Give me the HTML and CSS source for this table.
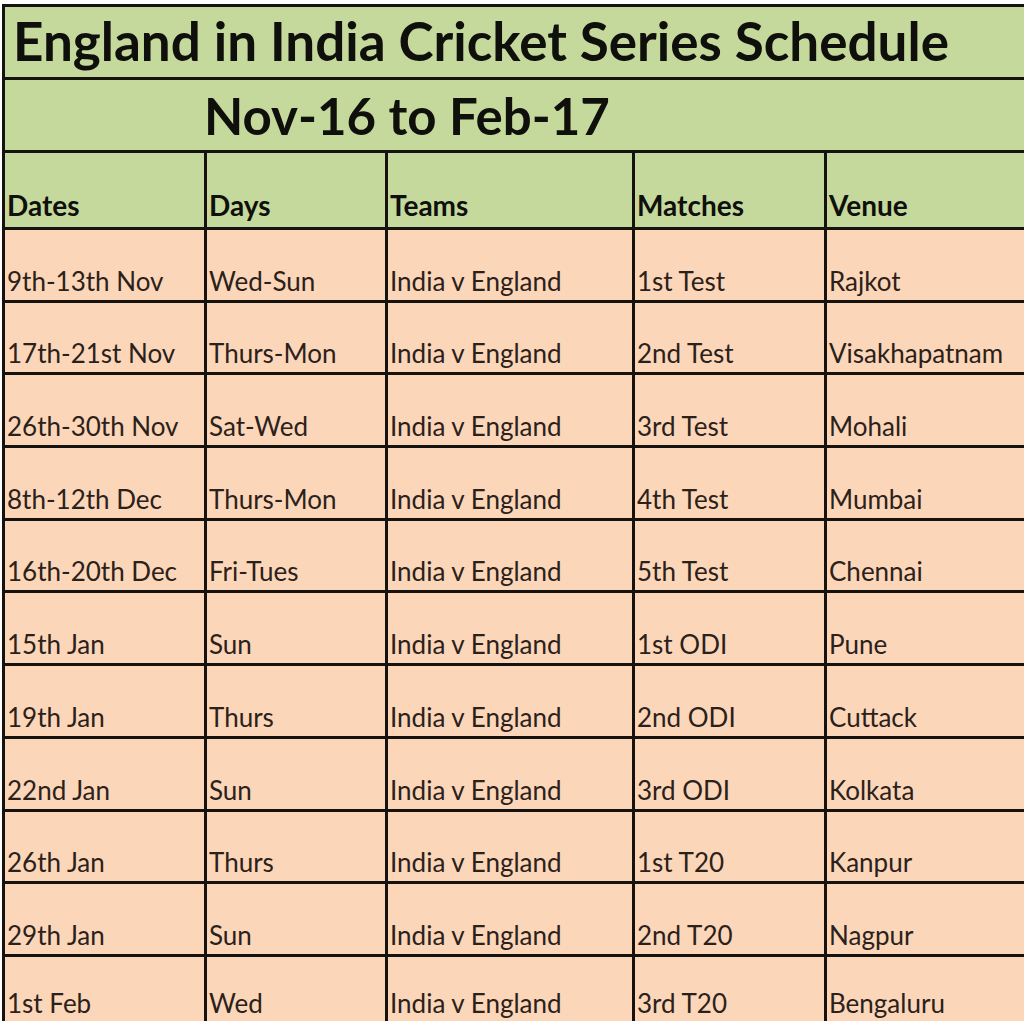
FILE: index.html
```html
<!DOCTYPE html>
<html>
<head>
<meta charset="utf-8">
<title>England in India Cricket Series Schedule</title>
<link rel="stylesheet" href="styles.css">
</head>
<body>
<div class="sheet">
<table class="schedule">
  <colgroup>
    <col class="c1"><col class="c2"><col class="c3"><col class="c4"><col class="c5">
  </colgroup>
  <tr class="title-row"><td colspan="5" class="title">England in India Cricket Series Schedule</td></tr>
  <tr class="sub-row"><td colspan="5" class="subtitle">Nov-16 to Feb-17</td></tr>
  <tr class="head-row"><th>Dates</th><th>Days</th><th>Teams</th><th>Matches</th><th>Venue</th></tr>
  <tr><td>9th-13th Nov</td><td>Wed-Sun</td><td>India v England</td><td>1st Test</td><td>Rajkot</td></tr>
  <tr><td>17th-21st Nov</td><td>Thurs-Mon</td><td>India v England</td><td>2nd Test</td><td>Visakhapatnam</td></tr>
  <tr><td>26th-30th Nov</td><td>Sat-Wed</td><td>India v England</td><td>3rd Test</td><td>Mohali</td></tr>
  <tr><td>8th-12th Dec</td><td>Thurs-Mon</td><td>India v England</td><td>4th Test</td><td>Mumbai</td></tr>
  <tr><td>16th-20th Dec</td><td>Fri-Tues</td><td>India v England</td><td>5th Test</td><td>Chennai</td></tr>
  <tr><td>15th Jan</td><td>Sun</td><td>India v England</td><td>1st ODI</td><td>Pune</td></tr>
  <tr><td>19th Jan</td><td>Thurs</td><td>India v England</td><td>2nd ODI</td><td>Cuttack</td></tr>
  <tr><td>22nd Jan</td><td>Sun</td><td>India v England</td><td>3rd ODI</td><td>Kolkata</td></tr>
  <tr><td>26th Jan</td><td>Thurs</td><td>India v England</td><td>1st T20</td><td>Kanpur</td></tr>
  <tr><td>29th Jan</td><td>Sun</td><td>India v England</td><td>2nd T20</td><td>Nagpur</td></tr>
  <tr class="last-row"><td>1st Feb</td><td>Wed</td><td>India v England</td><td>3rd T20</td><td>Bengaluru</td></tr>
</table>
</div>
</body>
</html>
```

FILE: styles.css
```css
html, body {
  margin: 0;
  padding: 0;
  background: #ffffff;
  overflow: hidden;
}

.sheet {
  margin-top: 4px;
  margin-left: 2px;
  width: 1060px;
}

.schedule {
  border-collapse: collapse;
  table-layout: fixed;
  width: 1060px;
  font-family: Lato, "Open Sans", sans-serif;
  color: #2b211b;
}

.c1 { width: 202px; }
.c2 { width: 181px; }
.c3 { width: 247px; }
.c4 { width: 192px; }
.c5 { width: 238px; }

.schedule td,
.schedule th {
  border: 3px solid #161210;
  padding: 0 0 3px 2px;
  height: 72.7px;
  vertical-align: bottom;
  text-align: left;
  white-space: nowrap;
  background: #fcd6b8;
  font-size: 26px;
  font-weight: 400;
  box-sizing: border-box;
}

.schedule .title-row td,
.schedule .sub-row td,
.schedule .head-row th {
  background: #c5d99c;
  color: #0f0f0c;
  font-weight: 700;
}

.schedule td.title {
  font-size: 53px;
  padding: 0 0 4px 8px;
  vertical-align: middle;
  height: 73px;
}

.schedule td.subtitle {
  font-size: 51px;
  padding: 0 0 0 199px;
  vertical-align: middle;
  height: 73px;
}

.schedule .head-row th {
  font-size: 28px;
  height: 77px;
  padding-bottom: 5px;
}

.schedule .last-row td {
  border-bottom-style: hidden;
  height: 66px;
  padding-bottom: 2px;
}
```
